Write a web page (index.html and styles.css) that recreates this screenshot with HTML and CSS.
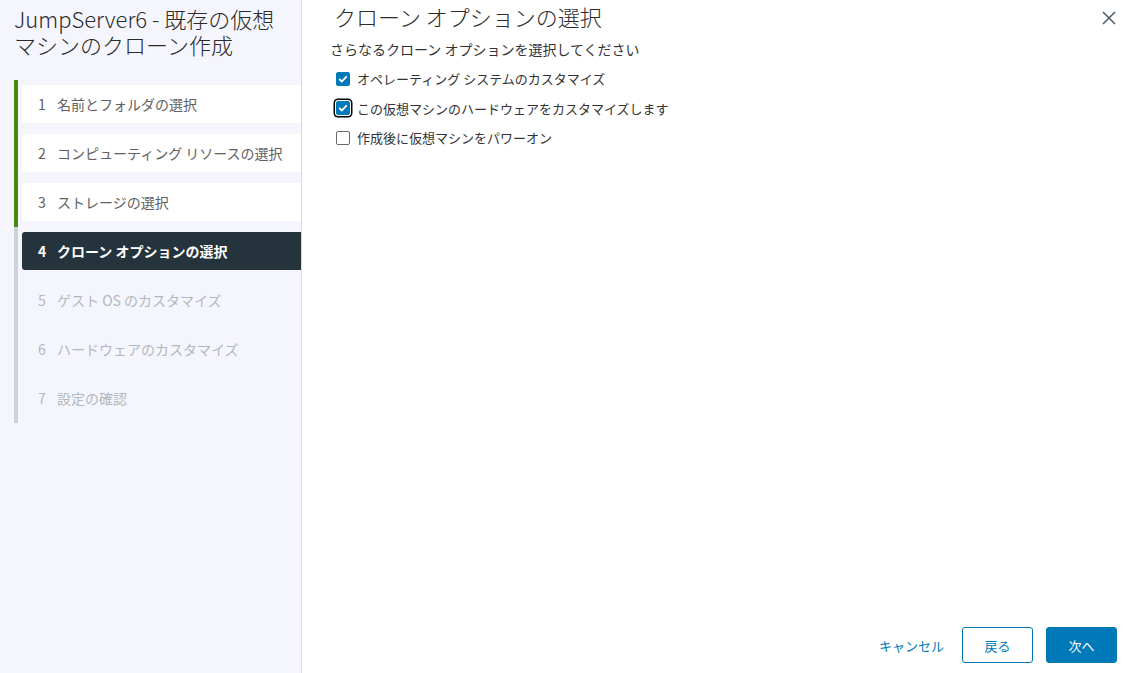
FILE: index.html
```html
<!DOCTYPE html>
<html lang="ja">
<head>
<meta charset="utf-8">
<title>クローン</title>
<link rel="stylesheet" href="styles.css">
</head>
<body>
<div class="wizard">
  <aside class="side">
    <h1 class="side-title">JumpServer6 - 既存の仮想マシンのクローン作成</h1>
    <ol class="steps">
      <li class="step done"><div class="box"><span class="num">1</span>名前とフォルダの選択</div></li>
      <li class="step done"><div class="box"><span class="num">2</span>コンピューティング リソースの選択</div></li>
      <li class="step done"><div class="box"><span class="num">3</span>ストレージの選択</div></li>
      <li class="step current"><div class="box"><span class="num">4</span>クローン オプションの選択</div></li>
      <li class="step todo"><div class="box"><span class="num">5</span>ゲスト OS のカスタマイズ</div></li>
      <li class="step todo"><div class="box"><span class="num">6</span>ハードウェアのカスタマイズ</div></li>
      <li class="step todo"><div class="box"><span class="num">7</span>設定の確認</div></li>
    </ol>
  </aside>
  <main class="content">
    <div class="head">
      <h2 class="title">クローン オプションの選択</h2>
      <button class="close" aria-label="閉じる">
        <svg width="14" height="14" viewBox="0 0 14 14"><path d="M1 1 L13 13 M13 1 L1 13" stroke="#4f5d68" stroke-width="1.6" fill="none"/></svg>
      </button>
    </div>
    <p class="lead">さらなるクローン オプションを選択してください</p>
    <ul class="options">
      <li class="opt"><span class="cb checked"><svg width="10" height="8" viewBox="0 0 10 8"><path d="M1.2 4 L3.8 6.4 L8.8 1.4" stroke="#fff" stroke-width="1.8" fill="none"/></svg></span>オペレーティング システムのカスタマイズ</li>
      <li class="opt"><span class="cb checked focus"><svg width="10" height="8" viewBox="0 0 10 8"><path d="M1.2 4 L3.8 6.4 L8.8 1.4" stroke="#fff" stroke-width="1.8" fill="none"/></svg></span>この仮想マシンのハードウェアをカスタマイズします</li>
      <li class="opt"><span class="cb"></span>作成後に仮想マシンをパワーオン</li>
    </ul>
    <div class="spacer"></div>
    <div class="footer">
      <button class="btn link">キャンセル</button>
      <button class="btn outline">戻る</button>
      <button class="btn primary">次へ</button>
    </div>
  </main>
</div>
</body>
</html>
```

FILE: styles.css
```css
* { box-sizing: border-box; }
html, body {
  margin: 0;
  padding: 0;
  height: 673px;
  overflow: hidden;
  background: #fff;
  font-family: "Noto Sans CJK JP", "Noto Sans", sans-serif;
  color: #333;
}
.wizard {
  display: flex;
  height: 673px;
}
.side {
  width: 302px;
  flex: none;
  background: #f5f6fd;
  border-right: 1px solid #d5d9e0;
  padding-top: 5px;
}
.side-title {
  margin: 0 0 0 14px;
  font-size: 22px;
  font-weight: 300;
  line-height: 26px;
  color: #2b2b2b;
  width: 280px;
  height: 75px;
}
.steps {
  list-style: none;
  margin: 0 0 0 14px;
  padding: 0;
}
.step {
  border-left: 4px solid #ccd3d8;
  padding: 5px 0 6px 4px;
}
.step.done { border-left-color: #4b860f; }
.box {
  height: 38px;
  display: flex;
  align-items: center;
  padding-left: 16px;
  font-size: 14px;
  color: #616161;
  border-radius: 3px 0 0 3px;
  white-space: nowrap;
}
.num {
  width: 19px;
  flex: none;
}
.done .box { background: #fff; }
.current .box {
  background: #25333d;
  color: #fff;
  font-weight: 700;
}
.todo .box { color: #b2b8be; }
.content {
  flex: 1;
  display: flex;
  flex-direction: column;
  padding: 0 9px 10px 28px;
}
.head {
  display: flex;
  align-items: flex-start;
  justify-content: space-between;
}
.title {
  margin: 1px 0 0 4px;
  font-size: 22px;
  font-weight: 300;
  line-height: 30px;
  color: #2b2b2b;
}
.close {
  background: none;
  border: 0;
  padding: 0;
  margin: 11px 0 0 0;
  width: 16px;
  height: 16px;
  cursor: pointer;
}
.lead {
  margin: 8px 0 0 0;
  font-size: 14px;
  line-height: 20px;
  color: #333;
}
.options {
  list-style: none;
  margin: 5px 0 0 6px;
  padding: 0;
}
.opt {
  display: flex;
  align-items: center;
  height: 29.5px;
  font-size: 13px;
  color: #333;
}
.cb {
  width: 14px;
  height: 14px;
  border: 1px solid #6a6a6a;
  border-radius: 2px;
  margin-right: 7px;
  display: flex;
  align-items: center;
  justify-content: center;
  background: #fff;
  flex: none;
}
.cb.checked {
  background: #0079b8;
  border-color: #0079b8;
}
.cb.focus {
  box-shadow: 0 0 0 1px #fff, 0 0 0 2.5px #000;
}
.spacer { flex: 1; }
.footer {
  display: flex;
  justify-content: flex-end;
  align-items: center;
  gap: 13px;
}
.btn {
  font-family: "Noto Sans CJK JP", "Noto Sans", sans-serif;
  font-size: 13px;
  height: 36px;
  min-width: 72px;
  border-radius: 3px;
  cursor: pointer;
}
.btn.link {
  background: none;
  border: 0;
  color: #0079b8;
  padding: 0 2px;
  min-width: 0;
  margin-right: 3px;
}
.btn.outline {
  background: #fff;
  border: 1px solid #0079b8;
  color: #0079b8;
  min-width: 71px;
}
.btn.primary {
  background: #0079b8;
  border: 1px solid #0079b8;
  color: #fff;
  min-width: 71px;
}
```
